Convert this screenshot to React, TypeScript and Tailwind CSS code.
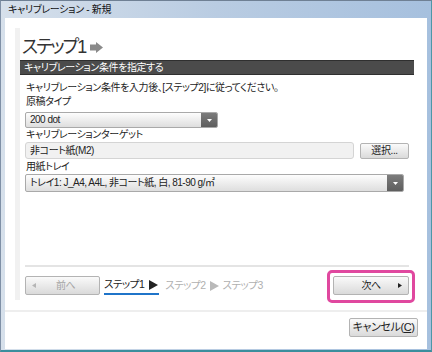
import { ReactNode } from "react";

const font = "font-['Liberation_Sans','Noto_Sans_CJK_JP',sans-serif] [font-feature-settings:'palt']";

function GreyButton({ children, className = "" }: { children: ReactNode; className?: string }) {
  return (
    <div
      className={`flex items-center justify-center rounded-[2px] border border-[#b3b3b3] bg-gradient-to-b from-[#fafafa] to-[#dadada] text-[10px] text-[#222] ${className}`}
    >
      {children}
    </div>
  );
}

function Select({ value, className = "" }: { value: string; className?: string }) {
  return (
    <div
      className={`flex items-stretch rounded-[2px] border border-[#a9a9a9] bg-gradient-to-b from-[#fdfdfd] to-[#dedede] ${className}`}
    >
      <div className="flex-1 flex items-center pl-[4px] text-[10px] tracking-[-0.5px] text-[#222]">{value}</div>
      <div className="w-[16px] flex items-center justify-center bg-gradient-to-b from-[#7c7c7c] to-[#5e5e5e] rounded-r-[1px]">
        <svg width="5" height="3" viewBox="0 0 5 3">
          <path d="M0 0h5L2.5 3z" fill="#fff" />
        </svg>
      </div>
    </div>
  );
}

function Tri({ color, size = 9 }: { color: string; size?: number }) {
  return (
    <svg width={size} height={size + 1} viewBox="0 0 9 10">
      <path d="M0 0l9 5-9 5z" fill={color} />
    </svg>
  );
}

export default function App() {
  return (
    <div
      className={`w-[432px] h-[352px] flex flex-col bg-gradient-to-r from-[#d6e0eb] via-[#b9cce2] to-[#a6c0de] border-t border-t-[#6f8094] border-l border-l-[#7f90a6] border-r border-r-[#4d97a7] border-b-[2px] border-b-[#3b8e9d] ${font}`}
    >
      {/* title bar */}
      <div className="h-[17px] flex items-center pl-[7px] text-[10px] tracking-[-0.3px] text-[#111]">
        キャリブレーション - 新規
      </div>

      <div className="flex-1 flex flex-col ml-[4px] mr-[4px] mb-[1px] bg-white">
        {/* step panel */}
        <div className="mt-[10px] ml-[10px] w-[401px] h-[272px] flex flex-col border-l-[5px] border-l-[#f1f1f1] bg-white">
          <div className="h-[32px] pt-[7px] flex items-start gap-[5px] pl-[2px]">
            <span className="text-[18px] leading-[24px] tracking-[-2px] text-[#333]">ステップ1</span>
            <svg width="13" height="11" viewBox="0 0 13 11" className="mt-[7px]">
              <path d="M0 2.5h6V0l7 5.5-7 5.5V8.5H0z" fill="#8a8a8a" />
            </svg>
          </div>
          <div className="h-[15px] w-[394px] flex items-center pl-[4px] bg-[#4b4b4b] border-y border-[#2f2f2f] text-[10px] tracking-[-0.4px] text-white">
            キャリブレーション条件を指定する
          </div>

          <div className="flex flex-col px-[5px] text-[10px] leading-[14px] tracking-[-0.4px] text-[#222]">
            <div className="mt-[6px] pl-[1px]">キャリブレーション条件を入力後、[ステップ2]に従ってください。</div>
            <div className="pl-[1px]">原稿タイプ</div>
            <Select value="200 dot" className="mt-[3px] h-[16px] w-[193px]" />
            <div className="pl-[1px]">キャリブレーションターゲット</div>
            <div className="flex items-center gap-[6px]">
              <div className="h-[17px] w-[329px] flex items-center pl-[4px] rounded-[3px] border border-[#d4d4d4] bg-[#f1f1f1]">
                非コート紙(M2)
              </div>
              <GreyButton className="h-[16px] w-[49px]">選択...</GreyButton>
            </div>
            <div className="mt-[1px] pl-[1px]">用紙トレイ</div>
            <Select value="トレイ1: J_A4, A4L, 非コート紙, 白, 81-90 g/㎡" className="h-[18px] w-[379px]" />
          </div>

          <div className="flex-1" />
          <div className="ml-[5px] w-[384px] h-[2px] bg-[#e4e4e4]" />
          <div className="mt-[9px] mb-[5px] pl-[5px] flex items-center h-[19px] tracking-[-0.5px]">
            <GreyButton className="h-[19px] w-[75px] !justify-start">
              <svg width="4" height="5" viewBox="0 0 4 5" className="ml-[6px]">
                <path d="M4 0v5L0 2.5z" fill="#b5b5b5" />
              </svg>
              <span className="ml-[20px] text-[#a5a5a5]">前へ</span>
            </GreyButton>
            <div className="ml-[4px] h-[19px] flex items-center gap-[5px] border-b-[2px] border-[#1f74c9] pr-[1px]">
              <span className="text-[10.5px] text-[#222]">ステップ1</span>
              <Tri color="#222" />
            </div>
            <div className="ml-[6px] flex items-center gap-[4px] text-[10.5px] text-[#b0b0b0]">
              <span>ステップ2</span>
              <Tri color="#b9b9b9" />
              <span>ステップ3</span>
            </div>
            <div className="flex-1" />
            <div className="relative mr-[7px]">
              <GreyButton className="h-[19px] w-[76px] relative">
                <span>次へ</span>
                <svg width="4" height="5" viewBox="0 0 4 5" className="absolute right-[6px] top-[6px]">
                  <path d="M0 0v5L4 2.5z" fill="#222" />
                </svg>
              </GreyButton>
              <span className="absolute -left-[6px] -right-[6px] -top-[6px] -bottom-[8px] rounded-[5px] border-[3px] border-[#e0489f]" />
            </div>
          </div>
        </div>

        <div className="mt-[10px] h-[2px] bg-[#eeeeee]" />
        <div className="mt-[6px] flex justify-end pr-[9px]">
          <GreyButton className="h-[19px] w-[69px] text-[11px] tracking-[-0.4px]">キャンセル(<span className="underline">C</span>)</GreyButton>
        </div>
      </div>
    </div>
  );
}
